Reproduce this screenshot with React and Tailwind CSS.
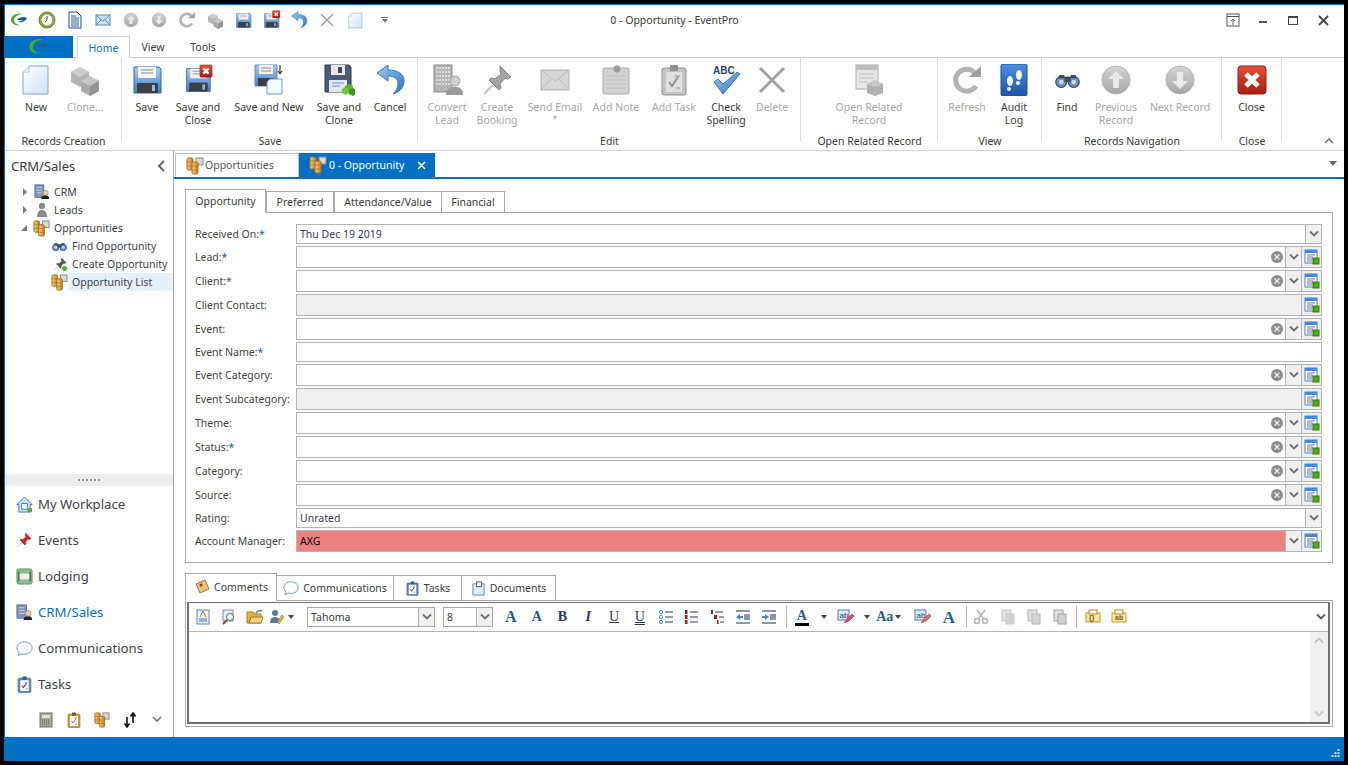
import React from 'react';

const Svg = ({ size = 32, vb = 32, children, className = '' }) => (
  <svg width={size} height={size} viewBox={`0 0 ${vb} ${vb}`} className={`shrink-0 ${className}`}>{children}</svg>
);

const Defs = () => (
  <svg width="0" height="0" className="shrink-0">
    <defs>
      <linearGradient id="page" x1="0" y1="0" x2="1" y2="1"><stop offset="0" stopColor="#ffffff" /><stop offset="1" stopColor="#cfe2f5" /></linearGradient>
      <linearGradient id="disk" x1="0" y1="0" x2="0" y2="1"><stop offset="0" stopColor="#a9cdf0" /><stop offset="1" stopColor="#3f7fc6" /></linearGradient>
      <linearGradient id="gray" x1="0" y1="0" x2="0" y2="1"><stop offset="0" stopColor="#d4d4d4" /><stop offset="1" stopColor="#a4a4a4" /></linearGradient>
      <linearGradient id="red" x1="0" y1="0" x2="0" y2="1"><stop offset="0" stopColor="#e8503a" /><stop offset="1" stopColor="#a81c10" /></linearGradient>
      <linearGradient id="blue" x1="0" y1="0" x2="1" y2="1"><stop offset="0" stopColor="#9cc8f0" /><stop offset="1" stopColor="#2f74c4" /></linearGradient>
      <linearGradient id="book" x1="0" y1="0" x2="0" y2="1"><stop offset="0" stopColor="#4c8ee0" /><stop offset="1" stopColor="#1c55a8" /></linearGradient>
      <linearGradient id="coin" x1="0" y1="0" x2="1" y2="0"><stop offset="0" stopColor="#f6d08a" /><stop offset="1" stopColor="#c97f1c" /></linearGradient>
    </defs>
  </svg>
);

const NewIcon = ({ size }) => (
  <Svg size={size}><path d="M9 2h19v28H3V8z" fill="url(#page)" stroke="#7ba5d2" /><path d="M9 2v6H3" fill="#eef5fc" stroke="#a8c6e4" /></Svg>
);
const CloneIcon = ({ size }) => (
  <Svg size={size}>
    <path d="M2 8l9-5 9 5v10l-9 5-9-5z" fill="#b4b4b4" /><path d="M2 8l9 5 9-5-9-5z" fill="#cdcdcd" />
    <path d="M12 17l9-5 9 5v10l-9 5-9-5z" fill="#a9a9a9" /><path d="M12 17l9 5 9-5-9-5z" fill="#c6c6c6" /><path d="M21 22v10l9-5V17z" fill="#949494" />
  </Svg>
);
const Floppy = ({ size }) => (
  <Svg size={size}>
    <path d="M3 3h25l2 2v24H3z" fill="url(#disk)" stroke="#2f66a8" />
    <rect x="7" y="3" width="18" height="11" fill="#f4f4f4" /><path d="M10 6h12M10 9h12" stroke="#8a8a8a" />
    <rect x="6" y="19" width="21" height="10" fill="#3c3f44" /><rect x="21" y="21" width="3" height="6" fill="#9cb8d8" />
  </Svg>
);
const RedX = ({ size = 32 }) => (
  <Svg size={size}>
    <rect x="2" y="2" width="28" height="28" rx="3" fill="url(#red)" stroke="#8a2018" />
    <path d="M10 10l12 12M22 10L10 22" stroke="#fff" strokeWidth="5" />
  </Svg>
);
const SaveClose = ({ size = 32 }) => (
  <span className="relative inline-flex">
    <Floppy size={size} />
    <span className="absolute -top-[2px] -right-[1px]"><RedX size={size * 0.5} /></span>
  </span>
);
const SaveNew = () => (
  <Svg size={34} vb={34}>
    <path d="M3 2h22v21H3z" fill="url(#disk)" stroke="#5b8cc6" /><rect x="7" y="2" width="14" height="9" fill="#f4f4f4" /><path d="M9 5h10M9 8h10" stroke="#8a8a8a" />
    <rect x="6" y="15" width="15" height="8" fill="#3c3f44" />
    <path d="M18 16h12v15H15V19z" fill="#f4f9fe" stroke="#6c9acb" />
    <path d="M28 2v8M26 8l2 3 2-3" stroke="#111" fill="none" />
  </Svg>
);
const SaveClone = () => (
  <Svg size={32}>
    <path d="M2 1h24l2 2v25H2z" fill="#4a5a78" stroke="#2d3850" /><rect x="8" y="1" width="14" height="10" fill="#e8e8e8" /><rect x="15" y="3" width="4" height="6" fill="#3c4860" />
    <rect x="6" y="16" width="18" height="12" fill="#dfe8f4" /><path d="M9 19h12M9 22h8" stroke="#7f8fa8" />
    <path d="M22 22l4-2 4 2v4l-4 2-4-2z" fill="#56b82a" /><path d="M26 26l4-2 3 2v4l-3 2-4-2z" fill="#3c9a1c" /><path d="M19 25l3-2 4 2v4l-3 2-4-2z" fill="#6cc83c" />
  </Svg>
);
const Undo = ({ size = 32 }) => (
  <Svg size={size}>
    <path d="M14 1L3 9l11 8v-5c7 0 10 3 10 8 0 4-2 7-5 10 7-2 11-7 11-13 0-7-6-11-16-11z" fill="url(#blue)" stroke="#3d7cc0" />
  </Svg>
);
const Building = () => (
  <Svg size={32}>
    <rect x="3" y="1" width="18" height="27" fill="#b4b4b4" stroke="#8c8c8c" />
    {[4, 8, 12, 16, 20].map(y => <path key={y} d={`M5 ${y}h14`} stroke="#dedede" strokeWidth="2" strokeDasharray="2 1" />)}
    <circle cx="24" cy="17" r="5" fill="#d0d0d0" stroke="#a0a0a0" /><path d="M15 31c0-6 4-8 9-8s8 2 8 8z" fill="#9a9a9a" />
  </Svg>
);
const Pin = ({ c1 = '#a4a4a4', c2 = '#8a8a8a', size = 32 }) => (
  <Svg size={size}>
    <path d="M3 30l9-9" stroke="#c4c4c4" strokeWidth="2" />
    <path d="M19 2l11 11-3 2-3-1-5 6 1 4-2 2L8 16l2-2 4 1 6-5-1-3z" fill={c1} stroke={c2} />
  </Svg>
);
const Mail = () => (
  <Svg size={32}><rect x="2" y="6" width="28" height="20" fill="#d6d6d6" stroke="#b0b0b0" /><path d="M2 6l14 11L30 6M2 26l10-11M30 26L20 15" stroke="#bcbcbc" fill="none" /></Svg>
);
const Note = () => (
  <Svg size={32}>
    <rect x="3" y="4" width="26" height="26" rx="2" fill="#d2d2d2" stroke="#a8a8a8" />
    {[12, 16, 20, 24].map(y => <path key={y} d={`M6 ${y}h20`} stroke="#bcbcbc" />)}
    <circle cx="17" cy="5" r="3.5" fill="#9a9a9a" />
  </Svg>
);
const Clip = ({ size = 32, body = '#c4c4c4', line = '#8f8f8f', mark = '#8f8f8f', paper = '#e0e0e0' }) => (
  <Svg size={size}>
    <rect x="4" y="4" width="24" height="27" rx="2" fill={body} stroke={line} />
    <rect x="8" y="8" width="16" height="20" fill={paper} />
    <rect x="12" y="1" width="8" height="6" rx="1" fill={line} />
    <path d="M11 18l3 4 6-9" stroke={mark} strokeWidth="2" fill="none" /><path d="M17 12h5M18 24h4" stroke={line} />
  </Svg>
);
const Spell = () => (
  <Svg size={32}>
    <text x="3" y="10" fontSize="10" fontWeight="700" fill="#2b3f73" fontFamily="Liberation Sans, sans-serif">ABC</text>
    <path d="M4 18l4-3 5 5L27 8l3 2-17 20z" fill="url(#blue)" stroke="#3a78bc" />
  </Svg>
);
const Cross = ({ size = 32 }) => (
  <Svg size={size}><path d="M4 4l24 24M28 4L4 28" stroke="#a2a2a2" strokeWidth="3" /></Svg>
);
const Related = () => (
  <Svg size={32}>
    <rect x="3" y="1" width="22" height="24" fill="#e6e6e6" stroke="#acacac" /><rect x="3" y="1" width="22" height="5" fill="#bdbdbd" />
    <path d="M6 10h15M6 14h15M6 18h9" stroke="#bcbcbc" />
    <path d="M14 20l8-4 8 4v9l-8 3-8-3z" fill="#b0b0b0" /><path d="M14 20l8 3 8-3-8-4z" fill="#c8c8c8" />
  </Svg>
);
const Refresh = ({ size = 32 }) => (
  <Svg size={size}>
    <path d="M25 22a11 11 0 1 1-1-13" fill="none" stroke="#b4b4b4" strokeWidth="5" />
    <path d="M18 13h12V2z" fill="#a0a0a0" />
  </Svg>
);
const Audit = () => (
  <Svg size={32}>
    <rect x="3" y="0" width="26" height="32" rx="2" fill="url(#book)" stroke="#1c4c96" />
    <ellipse cx="12" cy="17" rx="3" ry="5" fill="#fff" /><circle cx="11" cy="25" r="2" fill="#fff" />
    <ellipse cx="21" cy="11" rx="3" ry="5" fill="#fff" /><circle cx="20" cy="19" r="2" fill="#fff" />
  </Svg>
);
const Binoc = ({ size = 32 }) => (
  <Svg size={size}>
    <circle cx="8" cy="18" r="7" fill="#6d8fb8" stroke="#2f4a70" strokeWidth="1.5" /><circle cx="24" cy="18" r="7" fill="#6d8fb8" stroke="#2f4a70" strokeWidth="1.5" />
    <circle cx="8" cy="18" r="3" fill="#c8daf0" /><circle cx="24" cy="18" r="3" fill="#c8daf0" />
    <rect x="12" y="11" width="8" height="7" fill="#3c4a60" /><rect x="5" y="9" width="7" height="4" fill="#3c4a60" /><rect x="20" y="9" width="7" height="4" fill="#3c4a60" />
  </Svg>
);
const Round = ({ up, size = 32 }) => (
  <Svg size={size}>
    <circle cx="16" cy="16" r="14" fill="url(#gray)" stroke="#b4b4b4" />
    <path d={up ? 'M16 7l8 8h-5v9h-6v-9H8z' : 'M16 25l8-8h-5V8h-6v9H8z'} fill="#e9e9e9" />
  </Svg>
);
const TableIcon = () => (
  <Svg size={16} vb={16}>
    <rect x="1" y="1" width="12" height="13" fill="#fff" stroke="#4a84c4" /><rect x="1" y="1" width="12" height="3" fill="#3d8ae0" />
    <path d="M3 6h8M3 8h6M3 10h6M3 12h5" stroke="#6a7f98" />
    <rect x="9" y="9" width="6" height="6" fill="#52a81e" stroke="#2f7a10" />
  </Svg>
);
const Coins = ({ size = 18 }) => (
  <Svg size={size} vb={18}>
    <rect x="10" y="1" width="7" height="7" fill="#d8d8d8" stroke="#8a8a8a" />
    <rect x="1" y="1" width="6" height="12" rx="1.5" fill="url(#coin)" stroke="#a8701c" />
    <rect x="6" y="5" width="6" height="12" rx="1.5" fill="url(#coin)" stroke="#a8701c" />
    <path d="M1 5h6M1 9h6M6 9h6M6 13h6" stroke="#a8701c" strokeWidth="0.7" />
  </Svg>
);
const PersonSmall = ({ size = 16, c = '#8c8c8c' }) => (
  <Svg size={size} vb={16}><circle cx="8" cy="4" r="3.2" fill={c} /><path d="M3 15c0-5 2-7 5-7s5 2 5 7z" fill={c} /></Svg>
);
const CrmIcon = ({ size = 18 }) => (
  <Svg size={size} vb={18}>
    <rect x="1" y="1" width="10" height="14" fill="#7f97bc" stroke="#5a6c8c" />
    <path d="M3 4h6M3 7h6M3 10h6" stroke="#c6d4e8" />
    <circle cx="13" cy="10" r="3" fill="#f0c89c" stroke="#8a6a40" strokeWidth="0.6" /><path d="M8 17c0-3 2-4 5-4s4 1 4 4z" fill="#222" />
  </Svg>
);
const Logo = ({ size = 18 }) => (
  <Svg size={size} vb={18}>
    <path d="M13 3C6 1 1 5 1 9c0 4 5 6 10 5-4 0-7-2-7-5 0-3 4-6 9-6z" fill="#3fae2a" />
    <path d="M7 9c2-3 7-4 10-2-1 3-5 5-9 4l5-2z" fill="#1c5ea8" />
  </Svg>
);
const Clock = () => (
  <Svg size={18} vb={18}>
    <circle cx="9" cy="9" r="8" fill="#8ea64c" stroke="#6c7f3c" /><circle cx="9" cy="9" r="5.4" fill="#fbfbf2" /><path d="M9 5v4l-2 2" stroke="#444" fill="none" />
  </Svg>
);
const DocLines = () => (
  <Svg size={18} vb={18}>
    <path d="M3 1h8l4 4v12H3z" fill="#fff" stroke="#1c4c9c" /><path d="M5 5h5M5 7h8M5 9h8M5 11h8M5 13h8M5 15h8" stroke="#1c5ab0" />
  </Svg>
);
const SmallMail = () => (
  <Svg size={18} vb={18}>
    <rect x="2" y="4" width="14" height="10" fill="#cfe2f5" stroke="#4f8ccc" /><path d="M2 4l7 6 7-6M2 14l5-5M16 14l-5-5" stroke="#4f8ccc" fill="none" />
  </Svg>
);

const RibbonBtn = ({ w, icon, lines, off, caret }) => (
  <div className="flex flex-col items-center" style={{ width: w }}>
    <div className="h-[34px] flex items-center justify-center">{icon}</div>
    <div className={`mt-[4px] text-center leading-[13px] ${off ? 'text-[#a8a8a8]' : 'text-[#3a3a3a]'}`}>
      {lines.map(l => <div key={l} className="whitespace-nowrap">{l}</div>)}
      {caret && <div className="text-[7px] leading-[8px] text-[#b8b8b8]">▼</div>}
    </div>
  </div>
);

const RibbonGroup = ({ w, pl = 0, center, label, children }) => (
  <div className="flex flex-col shrink-0 h-[92px]" style={{ width: w }}>
    <div className="flex flex-1 pt-[5px] border-r border-[#dcdcdc] mb-[6px] mt-0">
      <div className={`flex w-full ${center ? 'justify-center' : ''}`} style={{ paddingLeft: pl }}>{children}</div>
    </div>
    <div className="text-center text-[#3a3a3a] leading-[13px] mb-[2px] -mt-[12px]">{label}</div>
  </div>
);

const QAT = [
  <Logo />, <Clock />, <DocLines />, <SmallMail />, <Round up size={16} />, <Round size={16} />, <Refresh size={18} />, <CloneIcon size={17} />,
  <Floppy size={17} />, <SaveClose size={17} />, <Undo size={18} />, <Cross size={16} />, <NewIcon size={17} />,
];

const TitleBar = () => (
  <div className="grid grid-cols-[1fr_auto_1fr] items-center h-[31px] pb-px shrink-0">
    <div className="flex items-center">
      {QAT.map((ic, i) => <div key={i} className="w-[28px] flex items-center justify-center">{ic}</div>)}
      <div className="ml-[12px] flex flex-col items-center gap-[1px]">
        <div className="w-[7px] h-px bg-[#777]" />
        <div className="w-0 h-0 border-x-[3.5px] border-x-transparent border-t-[4px] border-t-[#777]" />
      </div>
    </div>
    <div className="text-[#3a3a3a]">0 - Opportunity - EventPro</div>
    <div className="flex items-center justify-end pr-[6px]">
      <div className="w-[30px] flex justify-center">
        <svg width="14" height="14" viewBox="0 0 14 14"><rect x="1" y="1" width="12" height="12" fill="none" stroke="#555" /><path d="M1 3.5h12M7 12V6M5 8l2-2 2 2" stroke="#555" fill="none" /></svg>
      </div>
      <div className="w-[30px] flex justify-center"><div className="w-[8px] h-[2px] mt-[3px] bg-[#555]" /></div>
      <div className="w-[30px] flex justify-center"><div className="w-[10px] h-[9px] border border-[#444] border-t-[2px]" /></div>
      <div className="w-[30px] flex justify-center">
        <svg width="11" height="11" viewBox="0 0 11 11"><path d="M1 1l9 9M10 1l-9 9" stroke="#444" strokeWidth="1.8" /></svg>
      </div>
    </div>
  </div>
);

const TabRow = () => (
  <div className="flex h-[22px] shrink-0 border-b border-[#d0d0d0]">
    <div className="w-[68px] bg-[#0070c4] h-[22px] flex items-center justify-center"><Logo size={22} /></div>
    <div className="ml-[4px] w-[53px] h-[22px] pt-[2px] bg-white border border-b-0 border-[#d0d0d0] text-[#0072c6] flex items-center justify-center">Home</div>
    <div className="w-[46px] pt-[2px] flex items-center justify-center text-[#3a3a3a]">View</div>
    <div className="w-[54px] pt-[2px] flex items-center justify-center text-[#3a3a3a]">Tools</div>
  </div>
);

const Ribbon = () => (
  <div className="flex h-[93px] shrink-0 border-b border-[#d4d4d4]">
    <RibbonGroup w={117} pl={7} label="Records Creation">
      <RibbonBtn w={48} icon={<NewIcon />} lines={['New']} />
      <RibbonBtn w={50} icon={<CloneIcon />} lines={['Clone…']} off />
    </RibbonGroup>
    <RibbonGroup w={296} pl={3} label="Save">
      <RibbonBtn w={44} icon={<Floppy />} lines={['Save']} />
      <RibbonBtn w={58} icon={<SaveClose size={28} />} lines={['Save and', 'Close']} />
      <RibbonBtn w={84} icon={<SaveNew />} lines={['Save and New']} />
      <RibbonBtn w={56} icon={<SaveClone />} lines={['Save and', 'Clone']} />
      <RibbonBtn w={46} icon={<Undo />} lines={['Cancel']} />
    </RibbonGroup>
    <RibbonGroup w={383} pl={6} label="Edit">
      <RibbonBtn w={46} icon={<Building />} lines={['Convert', 'Lead']} off />
      <RibbonBtn w={54} icon={<Pin />} lines={['Create', 'Booking']} off />
      <RibbonBtn w={62} icon={<Mail />} lines={['Send Email']} off caret />
      <RibbonBtn w={60} icon={<Note />} lines={['Add Note']} off />
      <RibbonBtn w={56} icon={<Clip />} lines={['Add Task']} off />
      <RibbonBtn w={48} icon={<Spell />} lines={['Check', 'Spelling']} />
      <RibbonBtn w={44} icon={<Cross />} lines={['Delete']} off />
    </RibbonGroup>
    <RibbonGroup w={137} center label="Open Related Record">
      <RibbonBtn w={76} icon={<Related />} lines={['Open Related', 'Record']} off />
    </RibbonGroup>
    <RibbonGroup w={104} pl={7} label="View">
      <RibbonBtn w={44} icon={<Refresh />} lines={['Refresh']} off />
      <RibbonBtn w={50} icon={<Audit />} lines={['Audit', 'Log']} />
    </RibbonGroup>
    <RibbonGroup w={180} pl={5} label="Records Navigation">
      <RibbonBtn w={40} icon={<Binoc size={25} />} lines={['Find']} />
      <RibbonBtn w={58} icon={<Round up />} lines={['Previous', 'Record']} off />
      <RibbonBtn w={70} icon={<Round />} lines={['Next Record']} off />
    </RibbonGroup>
    <RibbonGroup w={60} center label="Close">
      <RibbonBtn w={50} icon={<RedX />} lines={['Close']} />
    </RibbonGroup>
    <div className="flex-1 flex items-end justify-end pr-[10px] pb-[6px]">
      <svg width="10" height="7" viewBox="0 0 10 7"><path d="M1 6l4-4 4 4" stroke="#777" strokeWidth="1.6" fill="none" /></svg>
    </div>
  </div>
);

const TreeRow = ({ depth, arrow, icon, label, sel }) => (
  <div className="flex items-center h-[18px]">
    <div className="flex items-center justify-end shrink-0" style={{ width: depth ? 45 : 27 }}>
      {arrow === 'r' && <div className="w-0 h-0 mr-[5px] border-y-[4px] border-y-transparent border-l-[4px] border-l-[#7a7a7a]" />}
      {arrow === 'd' && <div className="w-0 h-0 mr-[5px] border-b-[6px] border-b-[#7a7a7a] border-l-[6px] border-l-transparent" />}
    </div>
    <div className="w-[19px] shrink-0 flex justify-center">{icon}</div>
    <div className={`flex-1 h-[18px] flex items-center pl-[3px] ${sel ? 'bg-[#e4f0fa]' : ''}`}>
      <span className="text-[#3f3f4a] whitespace-nowrap">{label}</span>
    </div>
  </div>
);

const NavItem = ({ icon, label, active }) => (
  <div className="flex items-center h-[36px] pl-[11px]">
    <div className="w-[22px] flex justify-start shrink-0">{icon}</div>
    <span className={`text-[13.2px] leading-[16px] ${active ? 'text-[#0072c6]' : 'text-[#3f3f4a]'}`}>{label}</span>
  </div>
);

const Sidebar = () => (
  <div className="w-[169px] shrink-0 border-r border-[#a8a8a8] flex flex-col">
    <div className="flex items-center justify-between h-[29px] pt-px pl-[6px] pr-[7px] shrink-0">
      <span className="text-[13px] text-[#3a3a3a]">CRM/Sales</span>
      <svg width="10" height="12" viewBox="0 0 10 12"><path d="M8 1L3 6l5 5" stroke="#666" strokeWidth="2" fill="none" /></svg>
    </div>
    <div className="pt-[3px] flex-1">
      <TreeRow arrow="r" icon={<CrmIcon size={16} />} label="CRM" />
      <TreeRow arrow="r" icon={<PersonSmall />} label="Leads" />
      <TreeRow arrow="d" icon={<Coins size={17} />} label="Opportunities" />
      <TreeRow depth icon={<Binoc size={15} />} label="Find Opportunity" />
      <TreeRow depth icon={
        <span className="relative inline-flex">
          <Pin size={14} c1="#555" c2="#333" />
          <span className="absolute -bottom-[1px] -right-[1px] w-[7px] h-[7px] rounded-full bg-[#44b030] border border-white" />
        </span>
      } label="Create Opportunity" />
      <TreeRow depth icon={<Coins size={17} />} label="Opportunity List" sel />
    </div>
    <div className="h-[12px] bg-[#ededed] shrink-0 flex items-center justify-center gap-[2px]">
      {[0, 1, 2, 3, 4, 5].map(i => <div key={i} className="w-[2px] h-[2px] bg-[#8c8c8c]" />)}
    </div>
    <div className="shrink-0">
      <NavItem label="My Workplace" icon={
        <Svg size={17} vb={18}><path d="M9 1L1 9h2v8h12V9h2z" fill="#cfe2f5" stroke="#3c78b4" /><rect x="6" y="8" width="6" height="6" fill="#fff" stroke="#3c78b4" /><rect x="12" y="13" width="5" height="4" fill="#5aa82c" /></Svg>
      } />
      <NavItem label="Events" icon={<Pin size={16} c1="#e02020" c2="#a81010" />} />
      <NavItem label="Lodging" icon={
        <Svg size={17} vb={18}><rect x="1" y="1" width="16" height="16" rx="2" fill="#8fbc8f" stroke="#5f9460" /><rect x="3" y="6" width="12" height="6" fill="#f2f2ea" /><path d="M3 4v10M15 4v10" stroke="#3f6f45" strokeWidth="1.5" /></Svg>
      } />
      <NavItem label="CRM/Sales" active icon={<CrmIcon size={17} />} />
      <NavItem label="Communications" icon={
        <Svg size={17} vb={18}><path d="M9 2c4.4 0 8 2.6 8 6.5S13.4 15 9 15c-1 0-2 0-3-.3L2 16.500l1.500-3C2 12 1 10.500 1 8.500 1 4.600 4.600 2 9 2z" fill="#fff" stroke="#6c8fb4" /></Svg>
      } />
      <NavItem label="Tasks" icon={<Clip size={17} body="#5c8abc" line="#2f5a8c" mark="#c81818" paper="#fff" />} />
    </div>
    <div className="h-[35px] shrink-0 flex items-center pl-[26px]">
      <div className="w-[29px] flex justify-center">
        <Svg size={16} vb={16}><rect x="2" y="1" width="12" height="14" fill="#a8a8a0" stroke="#707068" /><rect x="4" y="3" width="8" height="3" fill="#dfe8d8" /><path d="M4 8h8M4 10h8M4 12h8" stroke="#555" strokeDasharray="1 1" /></Svg>
      </div>
      <div className="w-[28px] flex justify-center"><Clip size={16} body="#d8a030" line="#7a5810" mark="#5a7fb4" paper="#f4f8fc" /></div>
      <div className="w-[28px] flex justify-center"><Coins size={16} /></div>
      <div className="w-[28px] flex justify-center">
        <svg width="14" height="16" viewBox="0 0 14 16"><path d="M4 5v9M1.500 11.500L4 15l2.500-3.500M10 11V2M7.500 4.500L10 1l2.500 3.500" stroke="#111" strokeWidth="1.6" fill="none" /></svg>
      </div>
      <div className="w-[26px] flex justify-center">
        <svg width="10" height="8" viewBox="0 0 10 8"><path d="M1 1l4 4 4-4" stroke="#777" strokeWidth="1.6" fill="none" /></svg>
      </div>
    </div>
  </div>
);

const Chev = ({ c = '#6e6e6e' }) => (
  <svg width="10" height="8" viewBox="0 0 10 8"><path d="M1 1.500l4 4 4-4" stroke={c} strokeWidth="1.8" fill="none" /></svg>
);

const Clear = () => (
  <div className="w-[12px] h-[12px] rounded-full bg-[#8c8c8c] flex items-center justify-center mr-[2px]">
    <svg width="6" height="6" viewBox="0 0 6 6"><path d="M.5.500l5 5M5.500.500l-5 5" stroke="#ececec" strokeWidth="1.2" /></svg>
  </div>
);

const BtnCell = ({ w, children }) => (
  <div className="h-full border-l border-[#b4b4b4] bg-[#f0f0f0] flex items-center justify-center shrink-0" style={{ width: w }}>{children}</div>
);

const Row = ({ label, req, value, kind = 'lookup', bg }) => (
  <div className="flex items-center">
    <div className="w-[101px] shrink-0 text-[#444] whitespace-nowrap">{label}{req && <span className="text-[#2a5a8a]">*</span>}</div>
    <div className={`flex-1 flex items-center border border-[#b4b4b4] ${kind === 'combo' || kind === 'text' ? 'h-[20px]' : 'h-[22px]'} ${bg || 'bg-white'}`}>
      <div className="flex-1 pl-[3px] text-[#3a3a5a]">{value}</div>
      {kind === 'lookup' && <Clear />}
      {(kind === 'lookup' || kind === 'noclear') && <BtnCell w={16}><Chev /></BtnCell>}
      {kind !== 'combo' && kind !== 'text' && <BtnCell w={20}><TableIcon /></BtnCell>}
      {kind === 'combo' && <BtnCell w={16}><Chev /></BtnCell>}
    </div>
  </div>
);

const FormTab = ({ w, active, h, children }) => (
  <div className={`flex items-center justify-center gap-[4px] bg-white border border-[#a8a8a8] text-[#3a3a3a] shrink-0 ${active ? 'relative top-px border-b-white' : '-ml-px border-b-0'}`} style={{ width: w, height: h || (active ? 24 : 21) }}>
    {children}
  </div>
);

const Caret = () => <div className="w-0 h-0 border-x-[3px] border-x-transparent border-t-[4px] border-t-[#444]" />;

const TB = ({ w = 25.8, children }) => <div className="h-[24px] flex items-center justify-center shrink-0" style={{ width: w }}>{children}</div>;
const Sep = () => <div className="w-px h-[22px] bg-[#b8b8b8] shrink-0" />;
const Serif = ({ size = 15, children, className = '' }) => (
  <span className={`font-['Liberation_Serif',serif] font-bold text-[#2a5a96] leading-none ${className}`} style={{ fontSize: size }}>{children}</span>
);

const ListIc = ({ kind }) => (
  <Svg size={16} vb={16}>
    {kind === 'bullet' && [3, 8, 13].map(y => <circle key={y} cx="3" cy={y} r="1.6" fill="none" stroke="#4a8ac8" />)}
    {kind === 'num' && [3, 8, 13].map(y => <rect key={y} x="2" y={y - 2} width="2.500" height="4" fill="#b01818" />)}
    {kind === 'multi' && <><rect x="2" y="1" width="2" height="4" fill="#b01818" /><rect x="5" y="6" width="3" height="4" fill="#b01818" /><rect x="8" y="11" width="1.500" height="4" fill="#b01818" /></>}
    {kind === 'multi' ? <path d="M6 3h8M10 8h5M11 13h4" stroke="#2a3a5a" /> : <path d="M7 3h8M7 8h8M7 13h8" stroke="#2a3a5a" />}
  </Svg>
);
const Indent = ({ out }) => (
  <Svg size={16} vb={16}>
    <path d="M1 2h14M1 14h14M9 6h6M9 8h6M9 10h6" stroke="#1e2e4a" />
    <path d={out ? 'M1 8l4-3v2h3v2H5v2z' : 'M8 8L4 5v2H1v2h3v2z'} fill="#3f8ad0" />
  </Svg>
);
const AbIc = ({ pen }) => (
  <Svg size={17} vb={17}>
    <rect x="1" y="1" width="11" height="10" fill="#dbe8f6" stroke="#4a7cb4" />
    <text x="2.500" y="9" fontSize="8" fill="#2a3a5a" fontFamily="Liberation Sans, sans-serif">ab</text>
    <path d="M7 14l3-4 5-5 2 2-5 5z" fill={pen ? '#e05050' : '#e86a6a'} stroke="#a82828" strokeWidth="0.6" />
  </Svg>
);
const EditIc = ({ fill = '#c8c8c8' }) => (
  <Svg size={16} vb={16}><rect x="2" y="1" width="9" height="11" fill="#e2e2e2" stroke={fill} /><rect x="6" y="5" width="8" height="10" fill="#d2d2d2" stroke={fill} /></Svg>
);
const FieldIc = ({ t }) => (
  <Svg size={16} vb={16}>
    <rect x="1" y="4" width="14" height="9" fill="#f8e8a0" stroke="#c89820" />
    <rect x="4" y="1" width="8" height="4" fill="#fff" stroke="#b08820" />
    <text x="4" y="11" fontSize="7" fontWeight="700" fill="#805010" fontFamily="Liberation Sans, sans-serif">{t}</text>
  </Svg>
);

function PathPerson() {
  return (
    <>
      <circle cx="6" cy="4" r="3" fill="#5a78a8" />
      <path d="M1 14c0-4 2-6 5-6s5 2 5 6z" fill="#5a78a8" />
      <path d="M8 13l5-7 2 2-5 7z" fill="#e8a830" stroke="#906818" strokeWidth="0.5" />
    </>
  );
}

const EditorToolbar = () => (
  <div className="flex items-center h-[29px] border-b border-[#b4b4b4] pl-[1px] shrink-0">
    <TB w={26}><Svg size={16} vb={16}><rect x="2" y="1" width="12" height="14" fill="#eaf2fb" stroke="#4f8ccc" /><path d="M5 8l3-6 3 6" stroke="#d86020" fill="none" /><path d="M4 10h8M4 12h8" stroke="#4f6f9c" /></Svg></TB>
    <TB w={26}><Svg size={16} vb={16}><rect x="2" y="1" width="10" height="11" fill="#e6eef8" stroke="#6a90bc" /><circle cx="9" cy="8" r="3.500" fill="#fff" stroke="#5a6a7a" /><path d="M6 11l-4 4" stroke="#805020" strokeWidth="2" /></Svg></TB>
    <TB w={26}><Svg size={18} vb={18}><path d="M1 4h6l2 2h6v9H1z" fill="#e8b048" stroke="#a87a20" /><path d="M3 15l2-6h12l-2 6z" fill="#f6d480" stroke="#a87a20" /><path d="M10 5c2-3 4-3 6-2" stroke="#3f8ad0" strokeWidth="1.500" fill="none" /></Svg></TB>
    <div className="h-[24px] w-[27px] flex items-center gap-[3px] shrink-0 pl-[1px]">
      <Svg size={16} vb={16}><PathPerson /></Svg><Caret />
    </div>
    <div className="ml-[12px] w-[128px] h-[20px] border border-[#a8a8a8] flex items-center shrink-0">
      <div className="flex-1 pl-[3px] text-[#3a3a3a]">Tahoma</div>
      <BtnCell w={16}><Chev /></BtnCell>
    </div>
    <div className="ml-[8px] w-[50px] h-[20px] border border-[#a8a8a8] flex items-center shrink-0">
      <div className="flex-1 pl-[3px] text-[#3a3a3a]">8</div>
      <BtnCell w={16}><Chev /></BtnCell>
    </div>
    <div className="w-[5px] shrink-0" />
    <TB><Serif size={16}>A</Serif></TB>
    <TB><Serif size={14}>A</Serif></TB>
    <TB><Serif size={14} className="!text-[#2a3a5a]">B</Serif></TB>
    <TB><Serif size={14} className="italic !text-[#2a3a5a]">I</Serif></TB>
    <TB><Serif size={14} className="underline font-normal !text-[#2a3a5a]">U</Serif></TB>
    <TB><Serif size={14} className="underline decoration-double font-normal !text-[#2a3a5a]">U</Serif></TB>
    <TB><ListIc kind="bullet" /></TB>
    <TB><ListIc kind="num" /></TB>
    <TB><ListIc kind="multi" /></TB>
    <TB><Indent out /></TB>
    <TB><Indent /></TB>
    <TB w={4}><span /></TB>
    <Sep />
    <TB w={30}>
      <div className="flex flex-col items-center">
        <Serif size={14}>A</Serif>
        <div className="w-[14px] h-[3px] bg-black" />
      </div>
    </TB>
    <TB w={14}><Caret /></TB>
    <TB w={30}><AbIc pen /></TB>
    <TB w={12}><Caret /></TB>
    <div className="flex items-center justify-center gap-[2px] w-[30px] shrink-0 ml-[1px]"><Serif size={14}>Aa</Serif><Caret /></div>
    <TB w={38}><AbIc /></TB>
    <TB w={14}><Serif size={17}>A</Serif></TB>
    <TB w={10}><span /></TB>
    <Sep />
    <TB w={28}><Svg size={16} vb={16}><path d="M4 1l7 9M12 1L5 10" stroke="#b4b4b4" strokeWidth="1.500" /><circle cx="4" cy="12" r="2.500" fill="none" stroke="#b4b4b4" strokeWidth="1.500" /><circle cx="12" cy="12" r="2.500" fill="none" stroke="#b4b4b4" strokeWidth="1.500" /></Svg></TB>
    <TB w={26}><EditIc /></TB>
    <TB w={26}><EditIc fill="#b4b4b4" /></TB>
    <TB w={26}><EditIc fill="#a0a0a0" /></TB>
    <TB w={3}><span /></TB>
    <Sep />
    <TB w={32}><FieldIc t="{}" /></TB>
    <TB w={20}><FieldIc t="ab" /></TB>
    <div className="flex-1" />
    <div className="pr-[2px]"><Chev c="#555" /></div>
  </div>
);

const Main = () => (
  <div className="flex-1 min-w-0 flex flex-col">
    <div className="flex h-[28px] shrink-0 pt-[2px] pl-[1px] border-b-[2px] border-[#0070c4] items-stretch">
      <div className="w-[124px] border border-b-0 border-[#c4c4c4] flex items-center pl-[10px] gap-[1px] text-[#555]"><Coins /><span>Opportunities</span></div>
      <div className="w-[136px] bg-[#0070c4] flex items-center pl-[10px] gap-[2px] text-white">
        <Coins />
        <span className="flex-1">0 - Opportunity</span>
        <svg width="9" height="9" viewBox="0 0 9 9" className="mr-[9px]"><path d="M1 1l7 7M8 1L1 8" stroke="#fff" strokeWidth="1.500" /></svg>
      </div>
      <div className="flex-1 flex items-center justify-end pr-[7px] pb-[3px]">
        <div className="w-0 h-0 border-x-[4px] border-x-transparent border-t-[5px] border-t-[#666]" />
      </div>
    </div>
    <div className="flex-1 min-h-0 flex flex-col pl-[11px] pr-[11px] pt-[11px]">
      <div className="flex items-end h-[22px] shrink-0 relative z-10">
        <FormTab w={81} active>Opportunity</FormTab>
        <div className="w-px shrink-0" />
        <FormTab w={68}>Preferred</FormTab>
        <div className="w-px shrink-0" />
        <FormTab w={108}>Attendance/Value</FormTab>
        <FormTab w={64}>Financial</FormTab>
      </div>
      <div className="h-[351px] shrink-0 border border-[#a8a8a8] pl-[9px] pr-[10px] pt-[11px] flex flex-col gap-[2px]">
        <Row label="Received On:" req value="Thu Dec 19 2019" kind="combo" />
        <Row label="Lead:" req />
        <Row label="Client:" req />
        <Row label="Client Contact:" kind="button" bg="bg-[#f0f0f0]" />
        <Row label="Event:" />
        <Row label="Event Name:" req kind="text" />
        <Row label="Event Category:" />
        <Row label="Event Subcategory:" kind="button" bg="bg-[#f0f0f0]" />
        <Row label="Theme:" />
        <Row label="Status:" req />
        <Row label="Category:" />
        <Row label="Source:" />
        <Row label="Rating:" value="Unrated" kind="combo" />
        <Row label="Account Manager:" value={<span className="text-black">AXG</span>} kind="noclear" bg="bg-[#f08080]" />
      </div>
      <div className="flex items-end h-[28px] mt-[9px] shrink-0 relative z-10">
        <FormTab w={92} active h={28}>
          <Svg size={16} vb={16}><path d="M2 5l9-4 4 9-9 4z" fill="#e8c078" stroke="#a07a30" /><circle cx="7" cy="6" r="1.500" fill="#c82020" /></Svg>
          Comments
        </FormTab>
        <FormTab w={118} h={25}>
          <Svg size={16} vb={18}><path d="M9 2c4.400 0 8 2.600 8 6.500S13.400 15 9 15c-1 0-2 0-3-.3L2 16.500l1.500-3C2 12 1 10.500 1 8.500 1 4.600 4.600 2 9 2z" fill="#fff" stroke="#6c8fb4" /></Svg>
          Communications
        </FormTab>
        <FormTab w={69} h={25}><Clip size={15} body="#5c8abc" line="#2f5a8c" mark="#c81818" paper="#fff" />Tasks</FormTab>
        <FormTab w={95} h={25}>
          <Svg size={15} vb={16}><path d="M2 3h12v12H2z" fill="#dfebf8" stroke="#5a8cc4" /><rect x="6" y="1" width="5" height="5" fill="#fff" stroke="#555" /></Svg>
          Documents
        </FormTab>
      </div>
      <div className="h-[127px] shrink-0 border border-[#a8a8a8] pt-[1px] pl-[1px] pr-[2px] pb-[2px]">
        <div className="h-full border-2 border-[#707070] border-t-[1px] flex flex-col">
          <EditorToolbar />
          <div className="flex-1 flex justify-end">
            <div className="w-[18px] h-full bg-[#f0f0f0] flex flex-col items-center justify-between py-[4px]">
              <svg width="10" height="8" viewBox="0 0 10 8"><path d="M1 6.500l4-4 4 4" stroke="#c4c4c4" strokeWidth="1.800" fill="none" /></svg>
              <Chev c="#c4c4c4" />
            </div>
          </div>
        </div>
      </div>
    </div>
  </div>
);

export default function App() {
  return (
    <div className="w-[1348px] h-[765px] bg-black pt-[4px] px-[4px] overflow-hidden font-['Noto_Sans',sans-serif] text-[10.5px] leading-[13px]">
      <div className="w-[1340px] h-[757px] bg-white border-t border-l border-[#0070c4] flex flex-col">
        <Defs />
        <TitleBar />
        <TabRow />
        <Ribbon />
        <div className="flex-1 min-h-0 flex">
          <Sidebar />
          <Main />
        </div>
        <div className="h-[24px] shrink-0 bg-[#0070c4] flex items-end justify-end pr-[4px] pb-[3px]">
          <svg width="9" height="9" viewBox="0 0 9 9" fill="#cfd8e2">
            <rect x="6.500" y="0" width="2" height="2" /><rect x="3.500" y="3" width="2" height="2" /><rect x="6.500" y="3" width="2" height="2" />
            <rect x="0.500" y="6" width="2" height="2" /><rect x="3.500" y="6" width="2" height="2" /><rect x="6.500" y="6" width="2" height="2" />
          </svg>
        </div>
      </div>
    </div>
  );
}
